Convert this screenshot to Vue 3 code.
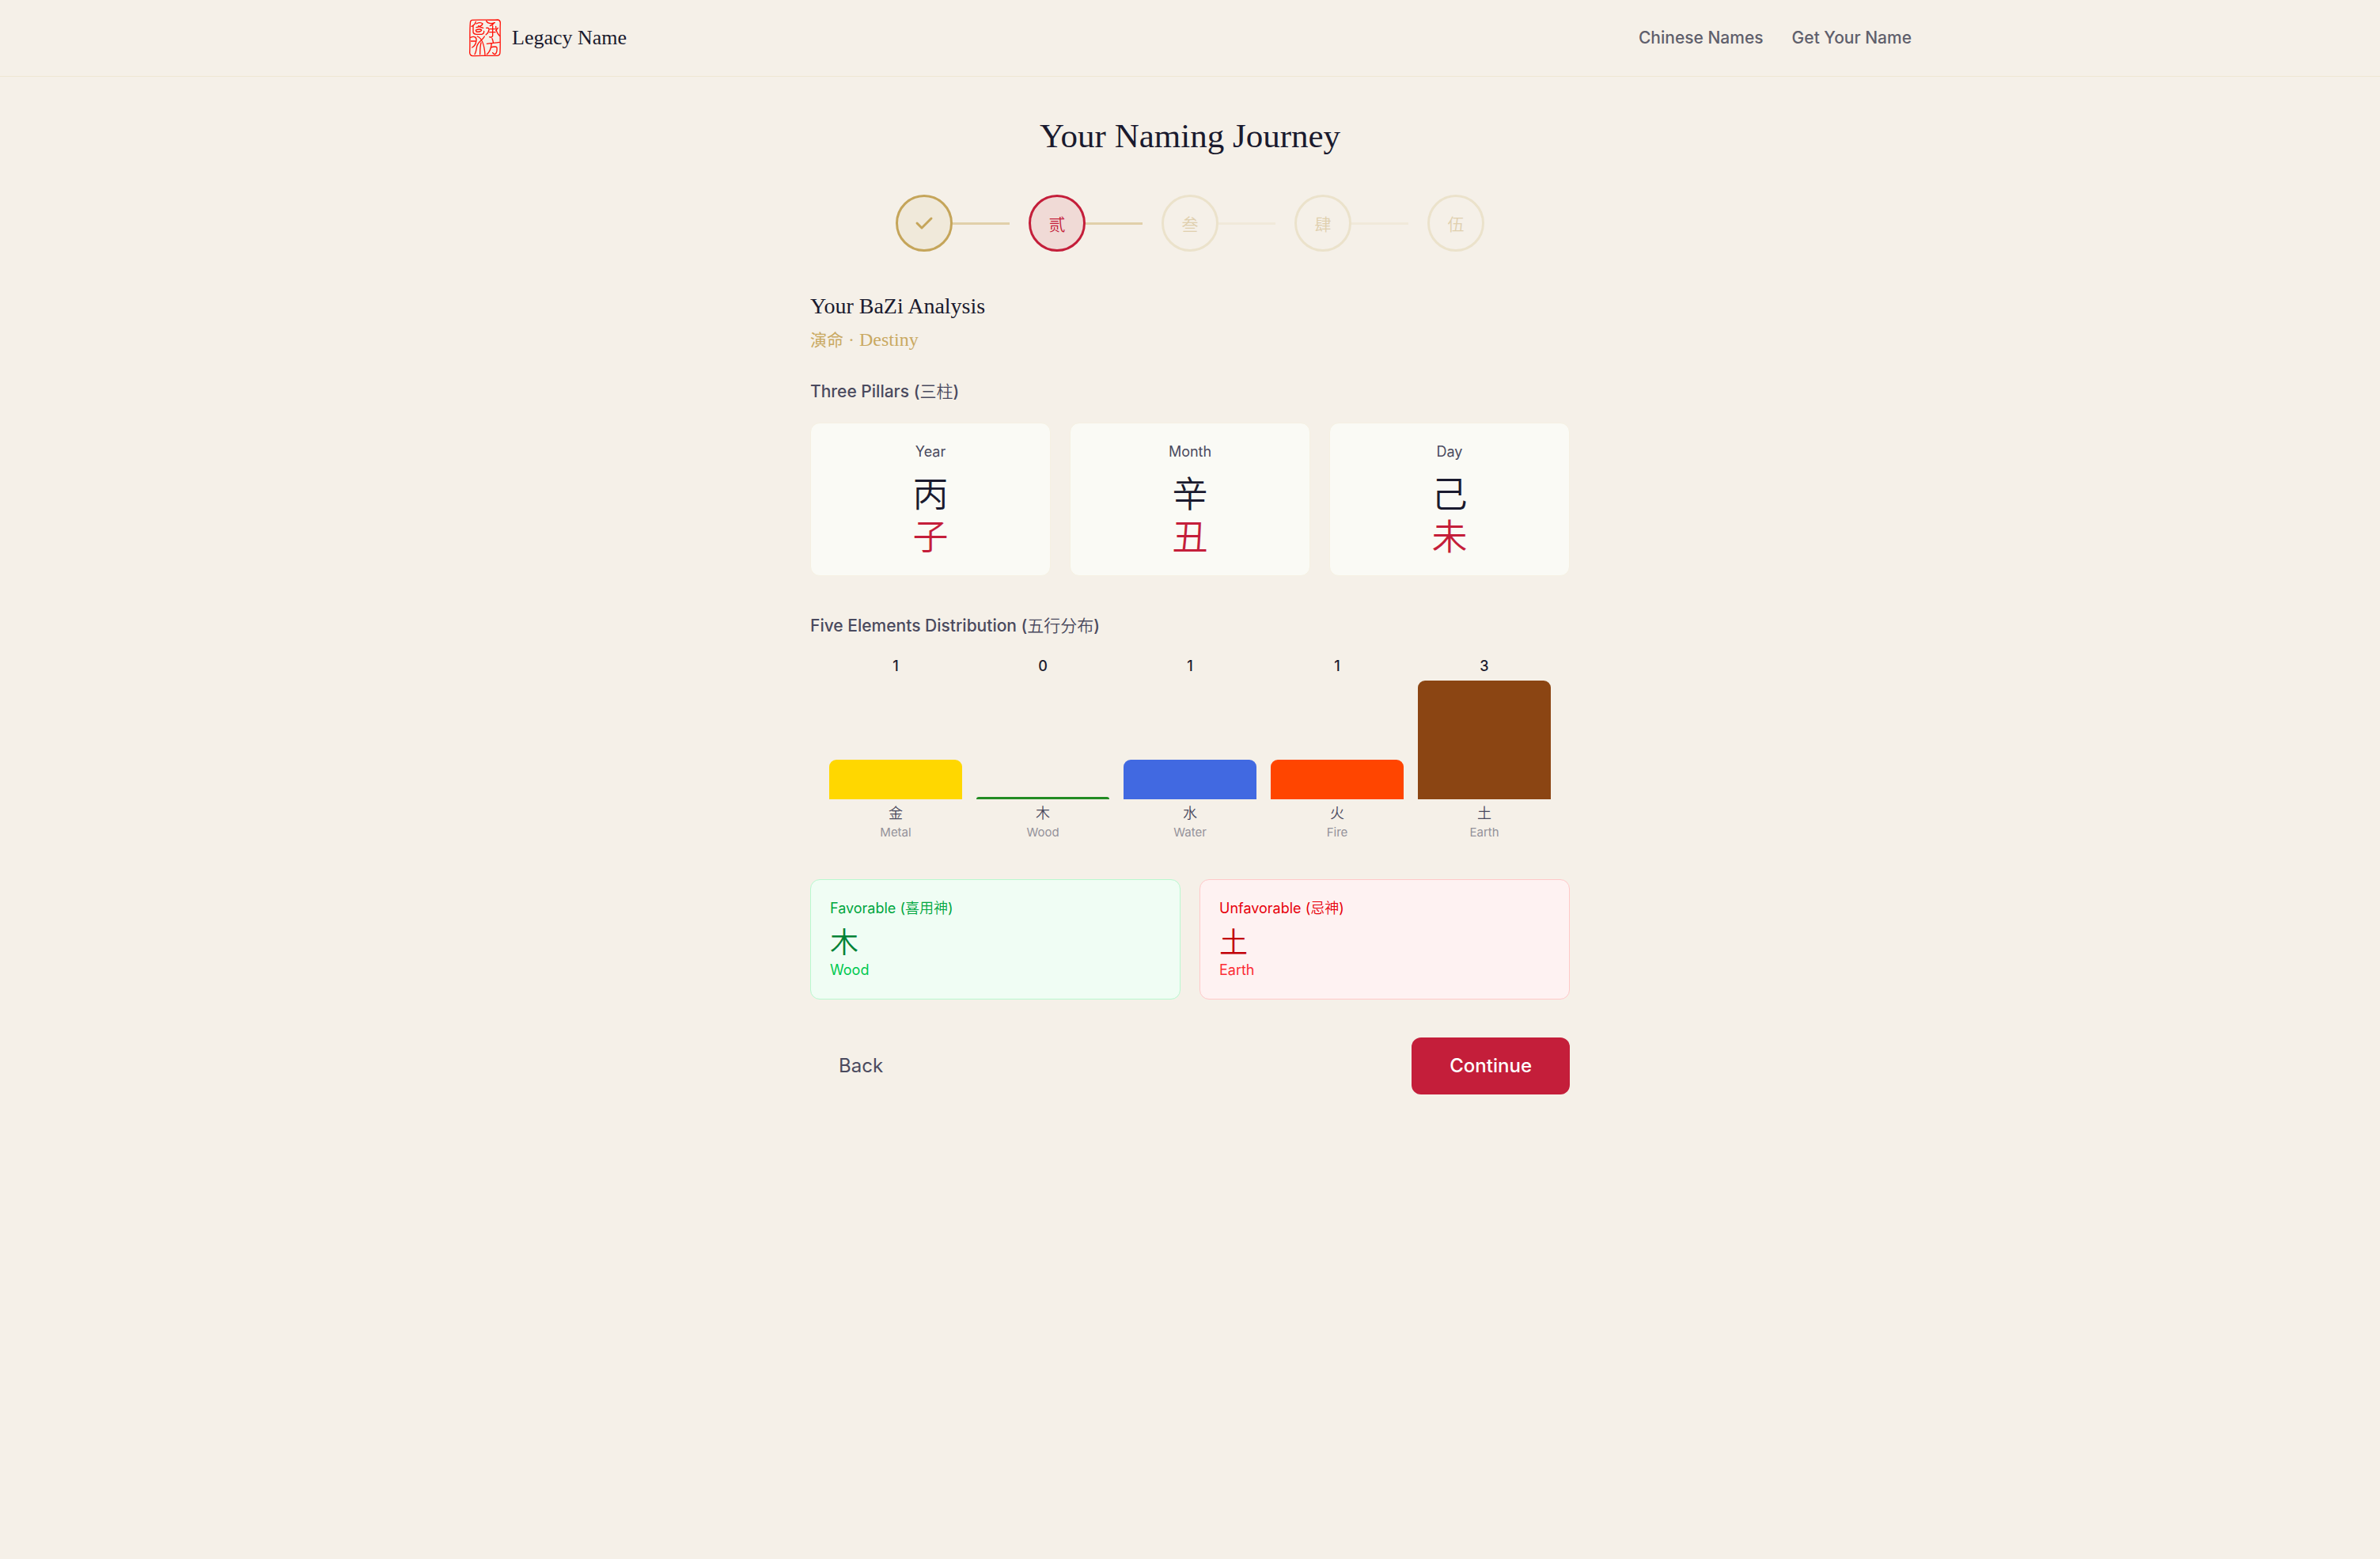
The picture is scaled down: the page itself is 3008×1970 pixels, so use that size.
<template>
    <div class="page">
        <header class="header">
            <div class="header__inner">
                <a class="logo" href="#">
                    <svg class="logo__seal" viewBox="36 42 123 144" aria-hidden="true">
                        <path class="logo__frame" d="M50 46 C80 44 120 47 148 45 Q156 46 157 56 C155 90 158 130 156 168 Q156 180 146 181 C110 182 80 180 52 182 Q42 181 41 170 C43 130 40 95 43 58 Q43 47 50 46 Z" />
                        <path d="M64 52 C62 60 56 66 48 70 M54 66 V92 Q56 100 66 100 H86 Q96 98 95 88 M66 60 C76 55 86 56 90 60 C88 68 76 72 66 74 M74 68 C78 72 84 74 92 76 M64 84 C72 80 84 80 86 84 C84 90 74 92 66 90 Z" />
                        <path d="M104 50 C110 60 124 60 136 56 M134 56 C130 64 124 66 118 68 M128 68 V106 Q124 114 116 110 M118 80 H136 M116 92 H138 M104 76 Q116 74 114 84 C112 94 108 98 102 102 M140 70 C140 88 146 98 154 106 M148 76 L140 86" />
                        <path d="M44 112 C58 106 68 110 66 124 C64 140 58 146 50 150 M46 126 H62 M70 108 C86 114 96 132 99 178 M97 108 C90 122 72 128 68 146 C66 160 64 170 60 176 M84 132 C80 146 80 160 80 176" />
                        <path d="M126 116 C128 122 130 126 130 132 M106 136 C120 132 140 134 154 130 M124 134 C122 154 116 168 106 176 M122 150 C130 146 142 146 144 150 C145 160 144 170 138 175 Q132 177 128 170" />
                    </svg>
                    <span class="logo__text">Legacy Name</span>
                </a>
                <nav class="nav">
                    <a class="nav__link" v-for="link in links" :key="link" href="#">{{ link }}</a>
                </nav>
            </div>
        </header>

        <main class="main">
            <h1 class="title">Your Naming Journey</h1>

            <ol class="steps">
                <li class="steps__item" :class="step.state" v-for="step in steps" :key="step.sign">
                    <span class="steps__circle">
                        <svg v-if="step.state === 'done'" class="steps__check" viewBox="0 0 20 20" aria-label="Done">
                            <path d="M16.707 5.293a1 1 0 010 1.414l-8 8a1 1 0 01-1.414 0l-4-4a1 1 0 011.414-1.414L8 12.586l7.293-7.293a1 1 0 011.414 0z" />
                        </svg>
                        <template v-else>{{ step.sign }}</template>
                    </span>
                </li>
            </ol>

            <section class="analysis">
                <h2 class="analysis__title">Your BaZi Analysis</h2>
                <p class="analysis__subtitle"><span lang="zh">演命</span> · Destiny</p>

                <h3 class="analysis__heading">Three Pillars (<span lang="zh">三柱</span>)</h3>
                <div class="pillars">
                    <div class="pillar" v-for="pillar in pillars" :key="pillar.name">
                        <p class="pillar__name">{{ pillar.name }}</p>
                        <p class="pillar__sign">{{ pillar.stem }}</p>
                        <p class="pillar__sign branch">{{ pillar.branch }}</p>
                    </div>
                </div>

                <h3 class="analysis__heading">Five Elements Distribution (<span lang="zh">五行分布</span>)</h3>
                <div class="chart">
                    <div class="chart__column" v-for="item in elements" :key="item.name">
                        <span class="chart__count">{{ item.count }}</span>
                        <div class="chart__track">
                            <div class="chart__bar" :style="{ height: barHeight(item.count), backgroundColor: item.color }"></div>
                        </div>
                        <span class="chart__sign">{{ item.sign }}</span>
                        <span class="chart__name">{{ item.name }}</span>
                    </div>
                </div>

                <div class="results">
                    <div class="result favorable">
                        <p class="result__label">Favorable (<span lang="zh">喜用神</span>)</p>
                        <p class="result__sign">木</p>
                        <p class="result__name">Wood</p>
                    </div>
                    <div class="result unfavorable">
                        <p class="result__label">Unfavorable (<span lang="zh">忌神</span>)</p>
                        <p class="result__sign">土</p>
                        <p class="result__name">Earth</p>
                    </div>
                </div>

                <div class="actions">
                    <button class="btn back" type="button">Back</button>
                    <button class="btn continue" type="button">Continue</button>
                </div>
            </section>
        </main>
    </div>
</template>

<script setup>
const links = ['Chinese Names', 'Get Your Name']

const steps = [
    { sign: '壹', state: 'done' },
    { sign: '贰', state: 'active' },
    { sign: '叁', state: 'pending' },
    { sign: '肆', state: 'pending' },
    { sign: '伍', state: 'pending' }
]

const pillars = [
    { name: 'Year', stem: '丙', branch: '子' },
    { name: 'Month', stem: '辛', branch: '丑' },
    { name: 'Day', stem: '己', branch: '未' }
]

const elements = [
    { sign: '金', name: 'Metal', count: 1, color: '#ffd700' },
    { sign: '木', name: 'Wood', count: 0, color: '#228b22' },
    { sign: '水', name: 'Water', count: 1, color: '#4169e1' },
    { sign: '火', name: 'Fire', count: 1, color: '#ff4500' },
    { sign: '土', name: 'Earth', count: 3, color: '#8b4513' }
]

// Bar height relative to the largest element, an empty one keeps a thin line
const maxCount = Math.max(...elements.map(item => item.count))
function barHeight(count){
    return Math.max(count / maxCount * 100, 2) + '%'
}
</script>

<style>
body{
    margin: 0;
    background-color: #f5f0e8;
}
</style>

<style scoped>
.page{
    min-height: 100vh;
    background-color: #f5f0e8;
    color: #1a1a2e;
    font-family: Inter, "Noto Sans CJK SC", sans-serif;
}
h1, h2, h3, p, ol{
    margin: 0;
    padding: 0;
    font-weight: 400;
}
.header{
    border-bottom: 1px solid #efe7d3;
}
.header__inner{
    max-width: 1824px;
    height: 96px;
    margin: 0 auto;
    padding: 0 48px;
    display: flex;
    align-items: center;
    justify-content: space-between;
}
.logo{
    display: flex;
    align-items: center;
    gap: 14px;
    color: #1a1a2e;
    text-decoration: none;
}
.logo__seal{
    width: 41px;
    height: 48px;
    fill: none;
    stroke: #ff1208;
    stroke-width: 4;
    stroke-linecap: round;
    stroke-linejoin: round;
}
.logo__text{
    font: 26px/36px "Liberation Serif", serif;
}
.nav{
    display: flex;
    gap: 36px;
}
.nav__link{
    color: #5f5f6c;
    font-size: 21px;
    line-height: 30px;
    font-weight: 500;
    text-decoration: none;
}
.main{
    max-width: 1344px;
    margin: 0 auto;
    padding: 48px 48px 96px;
}
.title{
    margin-bottom: 48px;
    font: 43px/53px "Liberation Serif", serif;
    text-align: center;
}
.steps{
    display: flex;
    justify-content: center;
    gap: 24px;
    margin-bottom: 48px;
    list-style: none;
}
.steps__item{
    display: flex;
    align-items: center;
}
.steps__circle{
    box-sizing: border-box;
    width: 72px;
    height: 72px;
    display: flex;
    align-items: center;
    justify-content: center;
    border: 3px solid #ebe2cb;
    border-radius: 50%;
    color: #dfcfae;
    font-size: 21px;
    font-weight: 350;
}
.steps__item:not(:last-child)::after{
    content: "";
    width: 72px;
    height: 3px;
    background-color: #f0e9da;
}
.steps__item.done::after,
.steps__item.active::after{
    background-color: #e1d0aa;
}
.done .steps__circle{
    border-color: #c5a55a;
    background-color: #f0e9da;
}
.active .steps__circle{
    border-color: #c41e3a;
    background-color: #f0dad6;
    color: #c41e3a;
}
.steps__check{
    width: 30px;
    height: 30px;
    fill: #c5a55a;
}
.analysis{
    max-width: 960px;
    margin: 0 auto;
}
.analysis__title{
    font: 28px/42px "Liberation Serif", serif;
}
.analysis__subtitle{
    margin: 6px 0 36px;
    color: #c9a962;
    font: 24px/30px "Liberation Serif", "Noto Sans CJK SC", serif;
}
.analysis__subtitle span{
    font-size: 21px;
    line-height: 1;
}
.analysis__heading{
    margin-bottom: 24px;
    color: #4a4a5e;
    font-size: 21px;
    line-height: 30px;
    font-weight: 500;
}
.analysis__heading span,
.result__label span{
    font-weight: 350;
}
.pillars{
    display: grid;
    grid-template-columns: repeat(3, 1fr);
    gap: 24px;
    margin-bottom: 48px;
}
.pillar{
    padding: 24px 24px 21px;
    border: 1px solid #f5f0e2;
    border-radius: 12px;
    background-color: #fafaf5;
    text-align: center;
}
.pillar__name{
    margin-bottom: 15px;
    color: #4a4a5e;
    font-size: 18px;
    line-height: 24px;
}
.pillar__sign{
    font-size: 45px;
    line-height: 54px;
    font-weight: 350;
}
.pillar__sign.branch{
    color: #c41e3a;
}
.chart{
    display: flex;
    gap: 18px;
    margin-bottom: 48px;
    padding: 0 24px;
}
.chart__column{
    flex: 1;
    display: flex;
    flex-direction: column;
    text-align: center;
}
.chart__count{
    font-size: 18px;
    line-height: 24px;
    font-weight: 500;
}
.chart__track{
    height: 150px;
    margin: 6px 0;
    display: flex;
    align-items: flex-end;
}
.chart__bar{
    width: 100%;
    border-radius: 9px 9px 0 0;
}
.chart__sign{
    color: #4a4a5e;
    font-size: 18px;
    line-height: 24px;
    font-weight: 350;
}
.chart__name{
    color: #94929a;
    font-size: 15px;
    line-height: 23px;
}
.results{
    display: grid;
    grid-template-columns: repeat(2, 1fr);
    gap: 24px;
    margin-bottom: 48px;
}
.result{
    padding: 24px;
    border: 1px solid;
    border-radius: 12px;
}
.result__label{
    margin-bottom: 9px;
    font-size: 18px;
    line-height: 24px;
}
.result__sign{
    font-size: 36px;
    line-height: 45px;
    font-weight: 350;
}
.result__name{
    font-size: 18px;
    line-height: 24px;
}
.favorable{
    border-color: #b9f8cf;
    background-color: #f0fdf4;
    color: #00a63e;
}
.favorable .result__sign{
    color: #008236;
}
.favorable .result__name{
    color: #00c950;
}
.unfavorable{
    border-color: #ffc9c9;
    background-color: #fef2f2;
    color: #e7000b;
}
.unfavorable .result__sign{
    color: #c10007;
}
.unfavorable .result__name{
    color: #fb2c36;
}
.actions{
    display: flex;
    justify-content: space-between;
}
.btn{
    padding: 18px 48px;
    border: none;
    border-radius: 12px;
    font: 500 24px/36px Inter, sans-serif;
    cursor: pointer;
}
.btn.back{
    padding: 18px 36px;
    background-color: transparent;
    color: #4a4a5e;
    font-weight: 400;
}
.btn.continue{
    background-color: #c41e3a;
    color: #fff;
}
</style>
